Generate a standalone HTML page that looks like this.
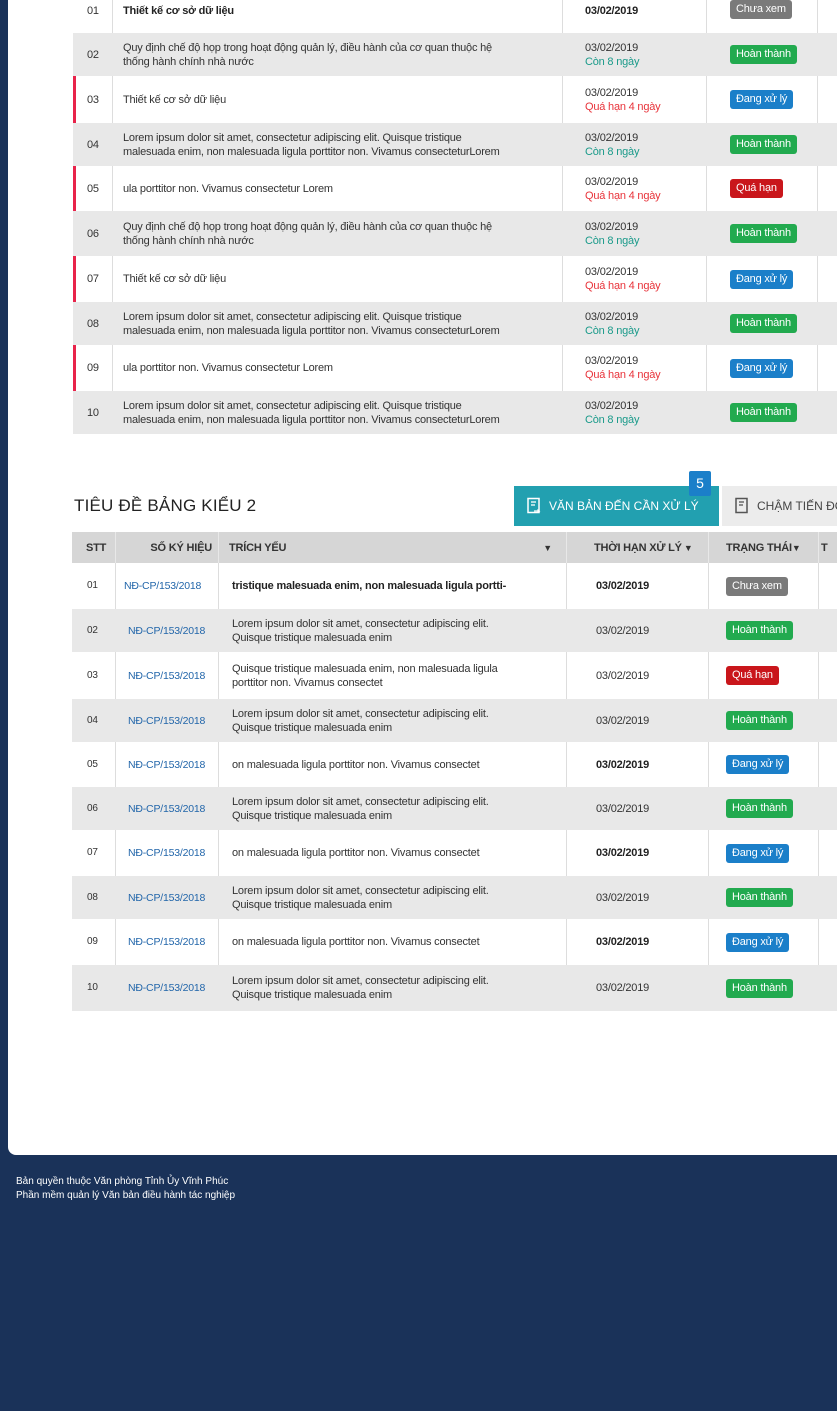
<!DOCTYPE html>
<html><head><meta charset="utf-8"><style>
*{margin:0;padding:0;box-sizing:border-box}
body{width:837px;height:1411px;background:#1a3259;font-family:"Liberation Sans",sans-serif;position:relative;overflow:hidden;color:#333}
.panel{position:absolute;left:8px;top:0;width:829px;height:1155px;background:#fff;border-bottom-left-radius:8px}
.r{position:absolute;left:0;width:100%}
.c{position:absolute;top:0;height:100%;display:flex;align-items:center;font-size:11px;letter-spacing:-0.2px;line-height:14px}
.b{display:inline-block;color:#fff;font-size:11px;padding:0 6px;height:19px;line-height:19px;border-radius:3px}
.g{background:#7a7a7a}.gr{background:#22aa4f}.bl{background:#1b7fc9}.rd{background:#c9161b}
.t{color:#1a9a8a}.q{color:#e8333a}
.bd{font-weight:bold;color:#222}
.ln{border-left:1px solid #ddd}
.red{position:absolute;left:0;top:0;width:3px;height:100%;background:#e8234a}
a{color:#2266aa;text-decoration:none}
</style></head><body>
<div class="panel"></div>

<div id="t1" style="position:absolute;left:73px;top:0;width:764px;height:434px">
<!-- columns: 0-39, 39-489, 489-633, 633-744, 744- -->
</div>

<div style="position:absolute;left:74px;top:496px;font-size:17px;color:#222;letter-spacing:0.2px">TIÊU ĐỀ BẢNG KIỂU 2</div>
<div style="position:absolute;left:514px;top:486px;width:205px;height:40px;background:#22a0b0;color:#fff;font-size:12px;display:flex;align-items:center;padding-left:12px">
<svg width="16" height="18" viewBox="0 0 16 18" style="margin-right:7px"><rect x="2" y="1.5" width="11" height="14" fill="none" stroke="#fff" stroke-width="1.5"/><line x1="5" y1="5" x2="10" y2="5" stroke="#fff" stroke-width="1.3"/><line x1="5" y1="8" x2="9" y2="8" stroke="#fff" stroke-width="1.3"/><path d="M8 14h5l-1.5-1.5M13 14l-1.5 1.5" stroke="#fff" stroke-width="1.2" fill="none"/></svg>VĂN BẢN ĐẾN CẦN XỬ LÝ</div>
<div style="position:absolute;left:689px;top:471px;width:22px;height:25px;background:#1b7fc9;color:#fff;font-size:14px;text-align:center;line-height:25px;border-radius:2px">5</div>
<div style="position:absolute;left:722px;top:486px;width:115px;height:40px;background:#ececec;color:#444;font-size:12px;display:flex;align-items:center;padding-left:12px;white-space:nowrap;overflow:hidden">
<svg width="16" height="18" viewBox="0 0 16 18" style="margin-right:7px;flex:none"><rect x="2" y="1.5" width="11" height="14" fill="none" stroke="#555" stroke-width="1.5"/><line x1="5" y1="5" x2="10" y2="5" stroke="#555" stroke-width="1.3"/><line x1="5" y1="8" x2="9" y2="8" stroke="#555" stroke-width="1.3"/></svg>CHẬM TIẾN ĐỘ</div>

<div id="t2" style="position:absolute;left:72px;top:532px;width:765px;height:480px"></div>

<div style="position:absolute;left:16px;top:1175px;color:#fff;font-size:10px;line-height:14px">Bản quyền thuộc Văn phòng Tỉnh Ủy Vĩnh Phúc<br>Phần mềm quản lý Văn bản điều hành tác nghiệp</div>

<script>
var B={g:'Chưa xem',gr:'Hoàn thành',bl:'Đang xử lý',rd:'Quá hạn'};
var L1='Quy định chế độ họp trong hoạt động quản lý, điều hành của cơ quan thuộc hệ<br>thống hành chính nhà nước';
var L2='Lorem ipsum dolor sit amet, consectetur adipiscing elit. Quisque tristique<br>malesuada enim, non malesuada ligula porttitor non. Vivamus consecteturLorem';
var r1=[
[-11,44,0,'Thiết kế cơ sở dữ liệu',1,'',0,'g'],
[33,43,1,L1,0,'Còn 8 ngày','t','gr'],
[76,47,0,'Thiết kế cơ sở dữ liệu',0,'Quá hạn 4 ngày','q','bl',1],
[123,43,1,L2,0,'Còn 8 ngày','t','gr'],
[166,45,0,'ula porttitor non. Vivamus consectetur Lorem',0,'Quá hạn 4 ngày','q','rd',1],
[211,45,1,L1,0,'Còn 8 ngày','t','gr'],
[256,46,0,'Thiết kế cơ sở dữ liệu',0,'Quá hạn 4 ngày','q','bl',1],
[302,43,1,L2,0,'Còn 8 ngày','t','gr'],
[345,46,0,'ula porttitor non. Vivamus consectetur Lorem',0,'Quá hạn 4 ngày','q','bl',1],
[391,43,1,L2,0,'Còn 8 ngày','t','gr']];
var h='';
r1.forEach(function(r,i){
var n=(i<9?'0':'')+(i+1);
h+='<div class="r" style="top:'+r[0]+'px;height:'+r[1]+'px;background:'+(r[2]?'#e8e8e8':'#fff')+'">'+(r[8]?'<div class="red"></div>':'')+
'<div class="c" style="left:14px">'+n+'</div>'+
'<div class="c ln" style="left:39px;width:450px;padding-left:10px;'+(r[2]?'border-color:transparent':'')+'"><span class="'+(r[4]?'bd':'')+'">'+r[3]+'</span></div>'+
'<div class="c ln" style="left:489px;width:144px;padding-left:22px;'+(r[2]?'border-color:transparent':'')+'"><span'+(r[4]?' class="bd"':'')+'>03/02/2019'+(r[5]?'<br><span class="'+r[6]+'">'+r[5]+'</span>':'')+'</span></div>'+
'<div class="c ln" style="left:633px;width:111px;padding-left:23px;align-items:'+(i==0?'flex-start;padding-top:11px':'center')+';'+(r[2]?'border-color:transparent':'')+'"><span class="b '+r[7]+'">'+B[r[7]]+'</span></div>'+
'<div class="c ln" style="left:744px;width:20px;'+(r[2]?'border-color:transparent':'')+'"></div></div>';
});
document.getElementById('t1').innerHTML=h;

var S1='Lorem ipsum dolor sit amet, consectetur adipiscing elit.<br>Quisque tristique malesuada enim';
var S2='on malesuada ligula porttitor non. Vivamus consectet';
var r2=[
[31,46,0,'tristique malesuada enim, non malesuada ligula portti-',1,'g'],
[77,43,1,S1,0,'gr'],
[120,47,0,'Quisque tristique malesuada enim, non malesuada ligula<br>porttitor non. Vivamus consectet',0,'rd'],
[167,43,1,S1,0,'gr'],
[210,45,0,S2,1,'bl'],
[255,43,1,S1,0,'gr'],
[298,46,0,S2,1,'bl'],
[344,43,1,S1,0,'gr'],
[387,46,0,S2,1,'bl'],
[433,46,1,S1,0,'gr']];
h='<div class="r" style="top:0;height:31px;background:#d6d6d6;font-weight:bold;color:#333">'+
'<div class="c" style="left:14px;font-size:11px">STT</div>'+
'<div class="c" style="left:43px;width:103px;justify-content:flex-end;padding-right:6px;border-left:1px solid #e8e8e8">SỐ KÝ HIỆU</div>'+
'<div class="c" style="left:146px;width:348px;padding-left:10px;border-left:1px solid #e8e8e8">TRÍCH YẾU<span style="position:absolute;right:14px;font-size:9px">▼</span></div>'+
'<div class="c" style="left:494px;width:142px;padding-left:27px;border-left:1px solid #e8e8e8">THỜI HẠN XỬ LÝ <span style="font-size:9px;margin-left:2px">▼</span></div>'+
'<div class="c" style="left:636px;width:110px;padding-left:17px;border-left:1px solid #e8e8e8">TRẠNG THÁI<span style="font-size:9px">▼</span></div>'+
'<div class="c" style="left:746px;width:19px;border-left:1px solid #e8e8e8;padding-left:2px">T</div></div>';
r2.forEach(function(r,i){
var n=(i<9?'0':'')+(i+1);var tb=r[2]?'border-color:transparent':'';
h+='<div class="r" style="top:'+r[0]+'px;height:'+r[1]+'px;background:'+(r[2]?'#e8e8e8':'#fff')+'">'+
'<div class="c" style="left:15px;font-size:10px">'+n+'</div>'+
'<div class="c ln" style="left:43px;width:103px;padding-left:'+(i==0?8:12)+'px;font-size:10.5px;'+tb+'"><a>NĐ-CP/153/2018</a></div>'+
'<div class="c ln" style="left:146px;width:348px;padding-left:13px;'+tb+'"><span class="'+(i==0?'bd':'')+'">'+r[3]+'</span></div>'+
'<div class="c ln" style="left:494px;width:142px;padding-left:29px;'+tb+'"><span class="'+(r[4]?'bd':'')+'">03/02/2019</span></div>'+
'<div class="c ln" style="left:636px;width:110px;padding-left:17px;'+tb+'"><span class="b '+r[5]+'">'+B[r[5]]+'</span></div>'+
'<div class="c ln" style="left:746px;width:19px;'+tb+'"></div></div>';
});
document.getElementById('t2').innerHTML=h;
</script>
</body></html>
